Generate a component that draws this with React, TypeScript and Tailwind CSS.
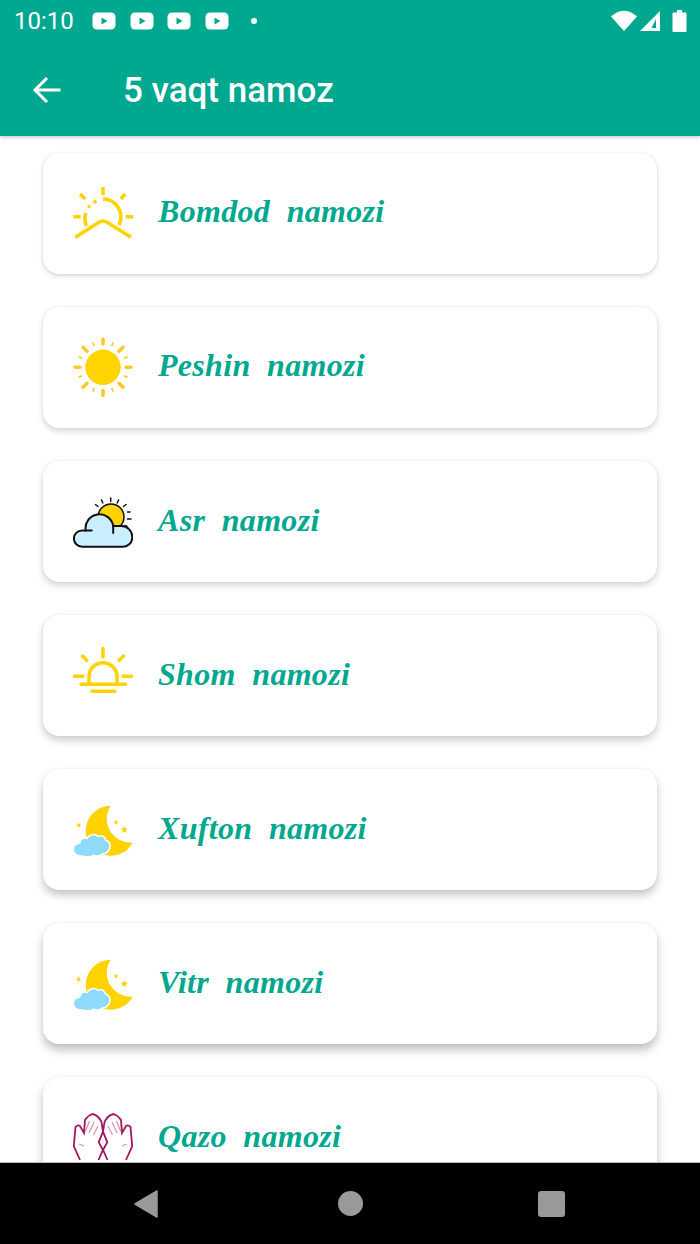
import React from 'react';

const SunriseIcon = () => (
  <svg width="60" height="60" viewBox="0 0 60 60" fill="none" stroke="#ffd200" strokeWidth="3.500">
    <path d="M30 4v8M7 11l5.300 5M52.300 11l-4.600 5M.3 33.700h7.400M52.700 33.700H60" />
    <path d="M2.300 54.300 26 39.300q4-2.600 8 0L58 54.300" />
    <path d="M30 16a18 18 0 0 1 16 26" />
    <path d="M13.500 43a18 18 0 0 1-.8-13" />
    <path d="M15 24.500l2-1.800M20.500 19.500l3-1.500" />
  </svg>
);

const SunIcon = () => (
  <svg width="60" height="60" viewBox="0 0 60 60" fill="none" strokeLinecap="round">
    <circle cx="30" cy="30.300" r="17.700" fill="#ffd400" />
    <path d="M38.500 14.800a17.700 17.700 0 0 1-9 33.200 17.700 17.700 0 0 0 9-33.200z" fill="#ffc107" />
    <g stroke="#ffc928" strokeWidth="3.500">
      <path d="M30 2v5M30 53.500v5M2 30.300h5M53 30.300h5M10 10.300l4 4M50 10.300l-4 4M10 50.300l4-4M50 50.300l-4-4" />
    </g>
    <g stroke="#ffc928" strokeWidth="1.800">
      <path d="M20 6l1 2.500M40 6l-1 2.500M20 54l1-2.500M40 54l-1-2.500M6 20l2.500 1M54 20l-2.500 1M6 40l2.500-1M54 40l-2.500-1" />
    </g>
  </svg>
);

const CloudSunIcon = () => (
  <svg width="60" height="60" viewBox="0 0 60 60" fill="none" stroke="#111" strokeWidth="2" strokeLinecap="round">
    <circle cx="38" cy="25" r="13" fill="#ffd200" strokeWidth="1.500" />
    <path
      d="M37.700 6v3.500M28.500 8l1.300 3M45.500 8l-1.300 3M22.500 12.500l2.500 2M53 12.500l-2.500 2M54.500 20h2.500M54.500 27h3.500M52 33.500l2 1"
      strokeWidth="1.500"
    />
    <path
      d="M9 54.700H50a9.300 9.300 0 0 0 9.300-9.300 11 11 0 0 0-11-11.400H40.200A13.800 13.800 0 0 0 12.700 38.500H9a8.100 8.100 0 0 0 0 16.200z"
      fill="#c9eeff"
    />
    <path d="M12.700 38.500h6M40.200 34V41" />
  </svg>
);

const SunsetIcon = () => (
  <svg width="60" height="60" viewBox="0 0 60 60" fill="none" stroke="#ffd200" strokeWidth="3.500" strokeLinecap="round">
    <path d="M30 2.500v8.500M9.500 10l4.200 4.300M50.500 10l-4.200 4.300M1.500 30.300h8.500M50 30.300h8.500" />
    <path d="M16 37.500v-6.800a14 14 0 0 1 28 0v6.800" />
    <path d="M8 38.300h44.500M19 45.300h23" />
  </svg>
);

const MoonIcon = () => (
  <svg width="60" height="60" viewBox="0 0 60 60">
    <path d="M37.700 5.700A25 25 0 1 0 59.700 42.700 24 24 0 0 1 37.700 5.700z" fill="#ffd200" />
    <path
      d="M7.500 56C3 56 .3 53 .3 49.500c0-3.600 2.700-6 6.200-6.200C7.500 39 11 37 14 38.500c2-4 8-5.500 11-2 3-1.500 7-.5 7.500 3.500 3 1 4.500 3.500 4.500 6 0 5-4 8-8 8-2 2.500-6 2.500-8 1-3 2-8 2-13.500 1z"
      fill="#8fdafa"
      stroke="#fff"
      strokeWidth="1.500"
    />
    <path d="M5.700 22.500l.8 1.800 1.800.3-1.300 1.200.4 1.800-1.700-1-1.700 1 .4-1.800-1.300-1.200 1.800-.3z" fill="#ffd200" />
    <path d="M43 19.500l.7 1.700 1.800.3-1.300 1.100.4 1.700-1.600-.9-1.600.9.4-1.700-1.300-1.100 1.800-.3z" fill="#ffd200" />
    <path d="M51.300 26l1 2.400 2.500.3-1.900 1.700.6 2.500-2.200-1.300-2.200 1.300.6-2.500-1.900-1.700 2.500-.3z" fill="#ffd200" />
  </svg>
);

const HandsIcon = () => (
  <svg width="60" height="60" viewBox="0 0 60 60" fill="none" stroke="#a3155f" strokeWidth="1.800" className="overflow-visible">
    <path d="M7 52 .8 38 2.500 19q2.500-2.500 4.500-1l4 7L12 12q3-4.500 7.400-6 5.500 1 9 7.700L30 23.700 25.700 34.300 30.500 43l4 9" />
    <path d="M53 52 59.200 38 57.500 19q-2.500-2.500-4.500-1l-4 7L48 12q-3-4.500-7.400-6-5.500 1-9 7.700L30 23.700 34.300 34.300 29.500 43l-4 9" />
    <g stroke="#d88fb5" strokeWidth="1.200">
      <path d="M16.500 13l-4.500 11M21 14l-5 11M25 18l-4.500 9M43.500 13l4.500 11M39 14l5 11M35 18l4.500 9M6 36l5 2M54 36l-5 2" />
    </g>
  </svg>
);

const YoutubeBadge = () => (
  <svg width="24" height="18" viewBox="0 0 24 18">
    <rect x=".5" y=".5" width="23" height="17" rx="4.500" fill="#fff" />
    <path d="M9.500 5.500 15.500 9 9.500 12.500z" fill="#00a88f" />
  </svg>
);

const prayers = [
  { name: 'Bomdod  namozi', icon: <SunriseIcon />, shadow: 'shadow-[0_2px_5px_rgba(0,0,0,0.16),0_0_2px_rgba(0,0,0,0.07)]' },
  { name: 'Peshin  namozi', icon: <SunIcon />, shadow: 'shadow-[0_3px_6px_rgba(0,0,0,0.17),0_0_2px_rgba(0,0,0,0.07)]' },
  { name: 'Asr  namozi', icon: <CloudSunIcon />, shadow: 'shadow-[0_3px_7px_rgba(0,0,0,0.19),0_0_2px_rgba(0,0,0,0.07)]' },
  { name: 'Shom  namozi', icon: <SunsetIcon />, shadow: 'shadow-[0_4px_8px_rgba(0,0,0,0.21),0_0_2px_rgba(0,0,0,0.07)]' },
  { name: 'Xufton  namozi', icon: <MoonIcon />, shadow: 'shadow-[0_5px_9px_rgba(0,0,0,0.23),0_0_2px_rgba(0,0,0,0.07)]' },
  { name: 'Vitr  namozi', icon: <MoonIcon />, shadow: 'shadow-[0_6px_10px_rgba(0,0,0,0.25),0_0_2px_rgba(0,0,0,0.07)]' },
  { name: 'Qazo  namozi', icon: <HandsIcon />, shadow: 'shadow-[0_6px_10px_rgba(0,0,0,0.25),0_0_2px_rgba(0,0,0,0.07)]' },
];

export default function App() {
  return (
    <div className="flex h-[1244px] w-[700px] flex-col overflow-hidden bg-white font-['Roboto',sans-serif]">
      <header className="relative z-10 h-[136px] shrink-0 bg-[#00a88f] text-white shadow-[0_1px_4px_rgba(0,0,0,0.25)]">
        <div className="flex h-[42px] items-center pl-[14px] pr-[13px]">
          <span className="w-[78px] text-[24px] leading-none">10:10</span>
          <div className="flex gap-[13.7px]">
            <YoutubeBadge />
            <YoutubeBadge />
            <YoutubeBadge />
            <YoutubeBadge />
          </div>
          <span className="ml-[22px] h-[6px] w-[6px] rounded-full bg-white" />
          <div className="ml-auto flex items-center">
            <svg width="26" height="22" viewBox="0 0 26 22" fill="#fff">
              <path d="M0 6.500Q13-5 26 6.500L13 21z" />
            </svg>
            <svg className="ml-[2px]" width="22" height="22" viewBox="0 0 22 22">
              <path d="M21 1v20H1z" fill="#fff" />
              <path d="M17 9v9H12.500z" fill="#00a88f" />
            </svg>
            <svg className="ml-[11px]" width="15" height="22" viewBox="0 0 15 22" fill="#fff">
              <path d="M5 0h5v2.500h3.500a1 1 0 0 1 1 1V21a1 1 0 0 1-1 1H1.500a1 1 0 0 1-1-1V3.500a1 1 0 0 1 1-1H5z" />
            </svg>
          </div>
        </div>
        <div className="flex h-[94px] items-center pl-[32px] pt-[2px]">
          <svg width="30" height="30" viewBox="0 0 30 30" fill="none" stroke="#fff" strokeWidth="3">
            <path d="M28.500 15H3M15 3 3 15 15 27" />
          </svg>
          <h1 className="ml-[61px] text-[35px] font-medium leading-none">5 vaqt namoz</h1>
        </div>
      </header>

      <main className="flex min-h-0 flex-1 flex-col gap-[33.12px] overflow-hidden px-[43px] pt-[16.8px]">
        {prayers.map((p) => (
          <div
            key={p.name}
            className={`flex h-[121px] shrink-0 items-center gap-[25px] rounded-[16px] bg-white pl-[30px] ${p.shadow}`}
          >
            {p.icon}
            <span className="whitespace-pre pb-[4px] font-['Liberation_Serif',serif] text-[32px] font-bold italic leading-none tracking-[0.3px] text-[#00a88f]">
              {p.name}
            </span>
          </div>
        ))}
      </main>

      <nav className="relative z-10 flex h-[82px] shrink-0 items-center border-t border-[#bbbbbb] bg-black pl-[134px] pr-[135px]">
        <svg width="24" height="28" viewBox="0 0 24 28">
          <path d="M23 1v26L1 14z" fill="#999" stroke="#999" strokeWidth="1.500" strokeLinejoin="round" />
        </svg>
        <div className="ml-[180px] h-[25px] w-[25px] rounded-full bg-[#999]" />
        <div className="ml-auto h-[26px] w-[27px] rounded-[3px] bg-[#999]" />
      </nav>
    </div>
  );
}
